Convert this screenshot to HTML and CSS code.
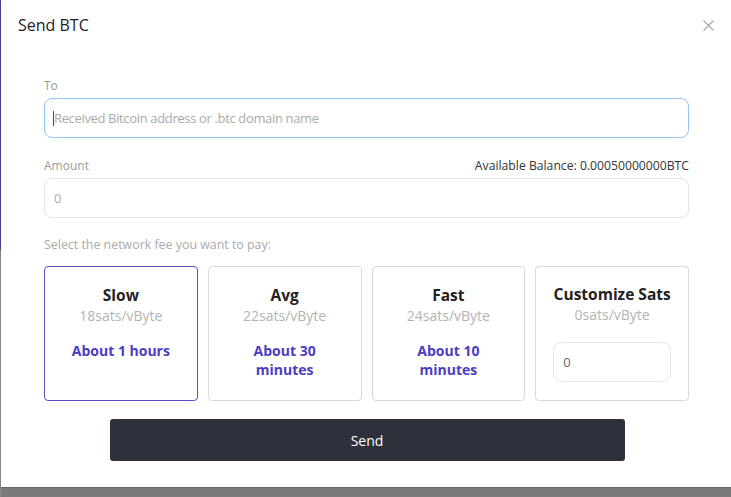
FILE: index.html
```html
<!DOCTYPE html>
<html>
<head>
<meta charset="utf-8">
<link rel="stylesheet" href="styles.css">
</head>
<body>
<div class="backdrop">
  <div class="modal">
    <div class="modal-header">
      <h2 class="title">Send BTC</h2>
      <button class="close" aria-label="close">
        <svg width="11" height="11" viewBox="0 0 11 11"><path d="M0.5 0.5 L10.5 10.5 M10.5 0.5 L0.5 10.5" stroke="#a8a8a8" stroke-width="1.1" fill="none"/></svg>
      </button>
    </div>
    <div class="modal-body">
      <div class="field">
        <div class="label-row"><span class="label">To</span></div>
        <div class="input focused"><span class="caret"></span><span class="placeholder">Received Bitcoin address or .btc domain name</span></div>
      </div>
      <div class="field">
        <div class="label-row"><span class="label">Amount</span><span class="balance">Available Balance: 0.00050000000BTC</span></div>
        <div class="input"><span class="placeholder">0</span></div>
      </div>
      <div class="fee-label">Select the network fee you want to pay:</div>
      <div class="fees">
        <div class="fee selected">
          <div class="fee-name">Slow</div>
          <div class="fee-rate">18sats/vByte</div>
          <div class="fee-time">About 1 hours</div>
        </div>
        <div class="fee">
          <div class="fee-name">Avg</div>
          <div class="fee-rate">22sats/vByte</div>
          <div class="fee-time">About 30<br>minutes</div>
        </div>
        <div class="fee">
          <div class="fee-name">Fast</div>
          <div class="fee-rate">24sats/vByte</div>
          <div class="fee-time">About 10<br>minutes</div>
        </div>
        <div class="fee custom">
          <div class="fee-name">Customize Sats</div>
          <div class="fee-rate">0sats/vByte</div>
          <div class="mini-input">0</div>
        </div>
      </div>
      <div class="actions">
        <button class="send">Send</button>
      </div>
    </div>
  </div>
</div>
</body>
</html>
```
FILE: styles.css
```css
html, body {
  margin: 0;
  padding: 0;
}
body {
  width: 731px;
  height: 497px;
  overflow: hidden;
  background: linear-gradient(to bottom, #4d4190 0, #4d4190 250px, #8a8a8a 250px) left top / 1px 100% no-repeat, #7b7b7b;
  font-family: "Open Sans", "Noto Sans", sans-serif;
}
.backdrop {
  padding-left: 1px;
}
.modal {
  background: #fff;
  height: 487px;
  box-sizing: border-box;
  box-shadow: 0 1px 1px rgba(0,0,0,0.15);
}
.modal-header {
  display: flex;
  justify-content: space-between;
  align-items: center;
  padding: 12px 17px 0 17px;
  height: 26px;
}
.title {
  margin: 0;
  font-size: 16px;
  font-weight: 400;
  color: #222;
  line-height: 26px;
}
.close {
  border: 0;
  background: none;
  padding: 0;
  display: flex;
  margin-top: 1px;
}
.modal-body {
  padding: 38px 42px 0 43px;
}
.field {
  margin-bottom: 18px;
}
.label-row {
  display: flex;
  justify-content: space-between;
  align-items: flex-end;
  height: 20px;
  margin-bottom: 2px;
}
.label {
  font-size: 12px;
  color: #999;
  line-height: 20px;
}
.balance {
  font-size: 12.2px;
  color: #333;
  line-height: 20px;
}
.input {
  height: 40px;
  box-sizing: border-box;
  border: 1px solid #e4e4e4;
  border-radius: 8px;
  display: flex;
  align-items: center;
  padding: 0 9px;
}
.input.focused {
  border: 1.5px solid #93c3ee;
  padding-left: 8px;
}
.caret {
  width: 1px;
  height: 15px;
  background: #444;
}
.placeholder {
  font-size: 13px;
  letter-spacing: -0.35px;
  color: #aaa;
}
.fee-label {
  font-size: 12.4px;
  color: #aaa;
  line-height: 20px;
  margin-top: -1px;
  margin-bottom: 11px;
}
.fees {
  display: grid;
  grid-template-columns: repeat(4, 1fr);
  gap: 10px;
}
.fee {
  border: 1.5px solid #d9d9d9;
  border-radius: 4px;
  padding: 17px 17px 18px;
  text-align: center;
  display: flex;
  flex-direction: column;
  align-items: stretch;
}
.fee.selected {
  border-color: #5a4ecb;
}
.fee-name {
  font-size: 15.5px;
  font-weight: 700;
  color: #222;
  line-height: 22px;
}
.fee-rate {
  font-size: 14px;
  color: #b3b3b3;
  line-height: 20px;
}
.fee-time {
  margin-top: 15px;
  font-size: 14px;
  font-weight: 700;
  color: #4b3cc4;
  line-height: 19px;
}
.custom .fee-name, .custom .fee-rate {
  margin-top: -1px;
  margin-bottom: 1px;
}
.mini-input {
  margin-top: 16px;
  height: 40px;
  box-sizing: border-box;
  border: 1px solid #e6e6e6;
  border-radius: 8px;
  text-align: left;
  padding: 0 9px;
  display: flex;
  align-items: center;
  font-size: 13px;
  color: #666;
}
.actions {
  display: flex;
  justify-content: center;
  margin-top: 18px;
  padding-left: 1px;
}
.send {
  width: 515px;
  height: 42px;
  border: 0;
  border-radius: 3px;
  background: #2e303c;
  color: #fff;
  font-family: "Open Sans", "Noto Sans", sans-serif;
  font-size: 14px;
}
```
